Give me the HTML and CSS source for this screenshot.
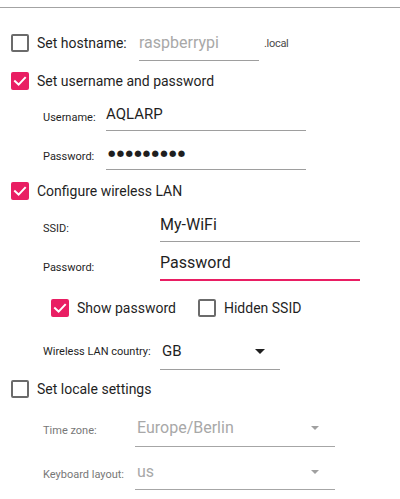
FILE: index.html
```html
<!DOCTYPE html>
<html>
<head>
<meta charset="utf-8">
<link rel="stylesheet" href="styles.css">
</head>
<body>
<div class="page">
  <div class="rule"></div>

  <div class="row r-host">
    <span class="cb"></span>
    <span class="check-label host-label">Set hostname:</span>
    <span class="field host-field placeholder">raspberrypi</span>
    <span class="suffix">.local</span>
  </div>

  <div class="row r-user-check">
    <span class="cb on"><svg viewBox="0 0 18 18"><polyline points="4,9.2 7.6,12.6 14,5.8"/></svg></span>
    <span class="check-label">Set username and password</span>
  </div>

  <div class="frow r-username">
    <span class="flabel w63">Username:</span>
    <span class="field w200 f15">AQLARP</span>
  </div>

  <div class="frow r-password">
    <span class="flabel w63">Password:</span>
    <span class="field w200 f15 dots">●●●●●●●●●</span>
  </div>

  <div class="row r-wifi-check">
    <span class="cb on"><svg viewBox="0 0 18 18"><polyline points="4,9.2 7.6,12.6 14,5.8"/></svg></span>
    <span class="check-label">Configure wireless LAN</span>
  </div>

  <div class="frow r-ssid">
    <span class="flabel w117">SSID:</span>
    <span class="field w200 f16">My-WiFi</span>
  </div>

  <div class="frow r-wpass">
    <span class="flabel w117">Password:</span>
    <span class="field w200 f16 focused">Password</span>
  </div>

  <div class="row r-show">
    <span class="cb on"><svg viewBox="0 0 18 18"><polyline points="4,9.2 7.6,12.6 14,5.8"/></svg></span>
    <span class="check-label show-label">Show password</span>
    <span class="cb"></span>
    <span class="check-label">Hidden SSID</span>
  </div>

  <div class="frow r-country">
    <span class="flabel w117">Wireless LAN country:</span>
    <span class="combo country-combo"><span class="combo-text">GB</span><span class="arrow"></span></span>
  </div>

  <div class="row r-locale">
    <span class="cb"></span>
    <span class="check-label">Set locale settings</span>
  </div>

  <div class="frow r-tz disabled">
    <span class="flabel w92">Time zone:</span>
    <span class="combo locale-combo tz-combo"><span class="combo-text">Europe/Berlin</span><span class="arrow"></span></span>
  </div>

  <div class="frow r-kb disabled">
    <span class="flabel w92">Keyboard layout:</span>
    <span class="combo locale-combo kb-combo"><span class="combo-text">us</span><span class="arrow"></span></span>
  </div>
</div>
</body>
</html>
```

FILE: styles.css
```css
html, body {
  margin: 0;
  padding: 0;
  background: #ffffff;
}
body {
  width: 400px;
  height: 499px;
  overflow: hidden;
  font-family: Roboto, "Liberation Sans", sans-serif;
  color: #1f1f1f;
}
.page {
  display: flex;
  flex-direction: column;
}
.rule {
  margin-top: 7px;
  height: 1px;
  background: #a3a3a3;
}

/* checkbox rows */
.row {
  display: flex;
  align-items: center;
  height: 18px;
  margin-left: 11px;
}
.cb {
  box-sizing: border-box;
  width: 18px;
  height: 18px;
  flex: none;
  border: 2px solid #6b6b6b;
  border-radius: 2px;
  display: flex;
}
.cb.on {
  border: none;
  background: #e91e63;
}
.cb svg {
  width: 18px;
  height: 18px;
}
.cb polyline {
  fill: none;
  stroke: #ffffff;
  stroke-width: 2;
  stroke-linecap: square;
}
.check-label {
  margin-left: 8px;
  font-size: 14px;
  line-height: 18px;
  white-space: nowrap;
}
.host-label {
  width: 102px;
  flex: none;
}
.show-label {
  margin-right: 22px;
}

.r-host { margin-top: 26px; }
.r-user-check { margin-top: 20px; }
.r-username { margin-top: 15px; }
.r-password { margin-top: 13px; }
.r-wifi-check { margin-top: 12px; }
.r-ssid { margin-top: 16px; }
.r-wpass { margin-top: 12px; }
.r-show { margin-top: 18px; margin-left: 51px; }
.r-country { margin-top: 16px; }
.r-locale { margin-top: 10px; }
.r-tz { margin-top: 17px; }
.r-kb { margin-top: 12px; }

/* text fields */
.field {
  box-sizing: border-box;
  display: block;
  line-height: 18px;
  padding: 0 0 7px 0;
  border-bottom: 1px solid #9e9e9e;
  white-space: nowrap;
  color: #1f1f1f;
}
.f15 { font-size: 15px; }
.f16 { font-size: 16px; }
.w200 { width: 200px; flex: none; }
.host-field {
  width: 120px;
  flex: none;
  font-size: 16px;
  padding-top: 0;
  padding-bottom: 8px;
  margin-top: 9px;
}
.placeholder { color: #a8a8a8; }
.suffix {
  margin-left: 5px;
  font-size: 11px;
  color: #4a4a4a;
  letter-spacing: -0.3px;
  margin-top: 0;
}
.field.focused {
  border-bottom: 2px solid #e91e63;
}
.dots {
  font-family: "DejaVu Sans", sans-serif;
  font-size: 8.5px;
  letter-spacing: 1.3px;
  padding-left: 2px;
}

/* form rows */
.frow {
  display: flex;
  align-items: center;
  margin-left: 43px;
}
.flabel {
  flex: none;
  font-size: 11px;
  line-height: 14px;
  color: #1f1f1f;
  white-space: nowrap;
}
.w63 { width: 63px; }
.w117 { width: 117px; }
.w92 { width: 92px; }

/* combo boxes */
.combo {
  box-sizing: border-box;
  display: flex;
  align-items: center;
  flex: none;
  border-bottom: 1px solid #9e9e9e;
}
.combo-text {
  flex: 1;
  line-height: 18px;
  white-space: nowrap;
}
.arrow {
  width: 0;
  height: 0;
  border-left: 5px solid transparent;
  border-right: 5px solid transparent;
  border-top: 5px solid #1f1f1f;
}
.country-combo {
  width: 120px;
  padding: 9px 15px 9px 2px;
  font-size: 15px;
}
.locale-combo {
  width: 200px;
  padding: 4px 16px 9px 2px;
  font-size: 16px;
}
.kb-combo { padding-bottom: 8px; }
.disabled .flabel { color: #777777; }
.disabled .combo-text { color: #a8a8a8; }
.disabled .arrow {
  border-left-width: 4.5px;
  border-right-width: 4.5px;
  border-top: 4px solid #a0a0a0;
}
.disabled .combo { border-bottom-color: #a6a6a6; }
```
